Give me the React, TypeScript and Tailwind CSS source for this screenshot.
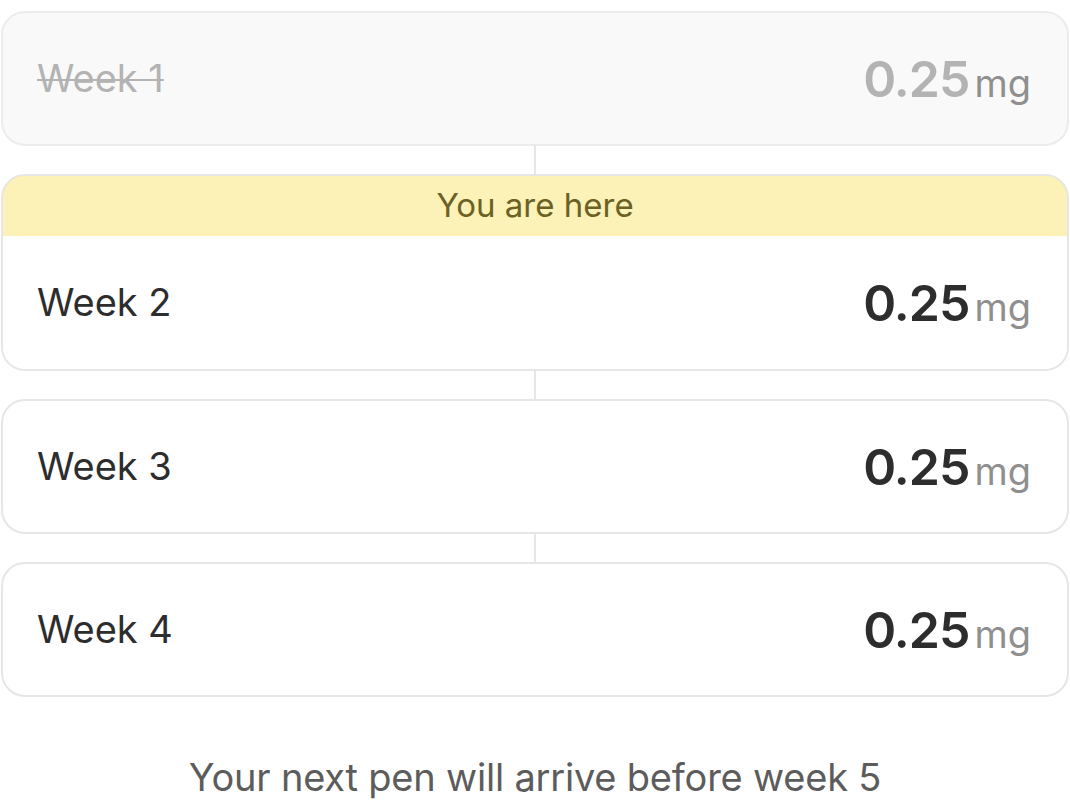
import React from "react";

const font = { fontFamily: "Inter, 'Noto Sans', sans-serif" };

function Dose({ muted }: { muted?: boolean }) {
  return (
    <div className="flex items-baseline gap-[5px]">
      <span
        className={`text-[50px] font-semibold leading-none tracking-[-1px] ${muted ? "text-[#b3b3b3]" : "text-[#2d2d2d]"}`}
      >
        0.25
      </span>
      <span className="text-[38px] leading-none text-[#8f8f8f]">mg</span>
    </div>
  );
}

function Connector() {
  return (
    <div className="flex h-[28px] justify-center">
      <div className="w-[2px] bg-[#e6e6e6]" />
    </div>
  );
}

function Row({ label }: { label: string }) {
  return (
    <div className="flex h-[135px] items-center justify-between rounded-[24px] border-2 border-[#e6e6e6] bg-white pl-[34px] pr-[36px]">
      <span className="text-[38px] text-[#2d2d2d]">{label}</span>
      <Dose />
    </div>
  );
}

export default function App() {
  return (
    <div className="min-h-[811px] bg-white px-[1px] pt-[11px]" style={font}>
      <div className="flex h-[135px] items-center justify-between rounded-[24px] border-2 border-[#ececec] bg-[#f9f9f9] pl-[34px] pr-[36px]">
        <span className="text-[38px] text-[#b3b3b3] line-through decoration-2">Week 1</span>
        <Dose muted />
      </div>
      <Connector />
      <div className="overflow-hidden rounded-[24px] border-2 border-[#e6e6e6]">
        <div className="-mx-[2px] -mt-[2px] flex h-[62px] items-center justify-center rounded-t-[24px] border-x-2 border-t-2 border-[#fde24a] bg-[#fcf2b7] text-[33px] text-[#6b6124]">
          You are here
        </div>
        <div className="flex h-[133px] items-center justify-between bg-white pl-[34px] pr-[36px]">
          <span className="text-[38px] text-[#2d2d2d]">Week 2</span>
          <Dose />
        </div>
      </div>
      <Connector />
      <Row label="Week 3" />
      <Connector />
      <Row label="Week 4" />
      <div className="mt-[58px] text-center text-[38px] leading-[44px] tracking-[-0.2px] text-[#5c5c5c]">
        Your next pen will arrive before week 5
      </div>
    </div>
  );
}
